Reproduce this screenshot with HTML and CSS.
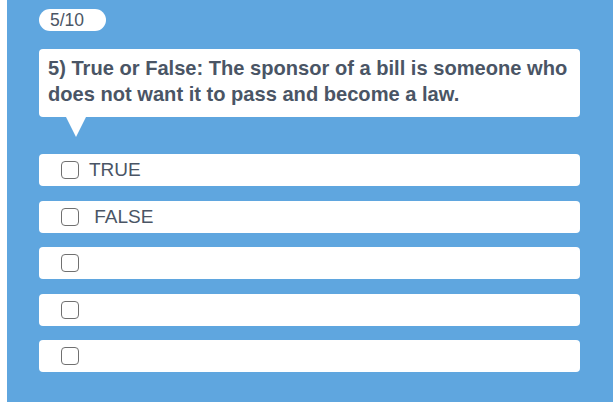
FILE: index.html
```html
<!DOCTYPE html>
<html>
<head>
<meta charset="utf-8">
<link rel="stylesheet" href="styles.css">
</head>
<body>
<div class="panel">
  <div class="badge">5/10</div>
  <div class="question">5) True or False: The sponsor of a bill is someone who does not want it to pass and become a law.</div>
  <div class="pointer"></div>
  <div class="options">
    <label class="option"><span class="box"></span><span class="label">TRUE</span></label>
    <label class="option"><span class="box"></span><span class="label">&nbsp;FALSE</span></label>
    <label class="option"><span class="box"></span><span class="label"></span></label>
    <label class="option"><span class="box"></span><span class="label"></span></label>
    <label class="option"><span class="box"></span><span class="label"></span></label>
  </div>
</div>
</body>
</html>
```
FILE: styles.css
```css
html, body {
  margin: 0;
  padding: 0;
  background: #ffffff;
}
body {
  font-family: "Liberation Sans", Arial, sans-serif;
  color: #4a5565;
}
.panel {
  margin-left: 7px;
  height: 402px;
  box-sizing: border-box;
  background: #5fa6df;
  padding: 9px 33px 0 32px;
}
.badge {
  width: 67px;
  height: 22px;
  box-sizing: border-box;
  background: #ffffff;
  border-radius: 11px;
  font-size: 17.5px;
  line-height: 22px;
  padding-left: 11px;
}
.question {
  margin-top: 18px;
  background: #ffffff;
  border-radius: 4px;
  padding: 7px 2px 0 9px;
  font-weight: bold;
  font-size: 20.1px;
  line-height: 25.5px;
  height: 68px;
  box-sizing: border-box;
}
.pointer {
  width: 0;
  height: 0;
  margin-left: 27px;
  border-left: 10px solid transparent;
  border-right: 10px solid transparent;
  border-top: 20px solid #ffffff;
}
.options {
  margin-top: 17px;
  display: flex;
  flex-direction: column;
  gap: 14.5px;
}
.option {
  display: flex;
  align-items: center;
  height: 32px;
  background: #ffffff;
  border-radius: 4px;
  padding-left: 22px;
  font-size: 19px;
}
.box {
  width: 18px;
  height: 18px;
  box-sizing: border-box;
  border: 1.5px solid #707070;
  border-radius: 4px;
  flex: none;
}
.label {
  margin-left: 10px;
}
```
